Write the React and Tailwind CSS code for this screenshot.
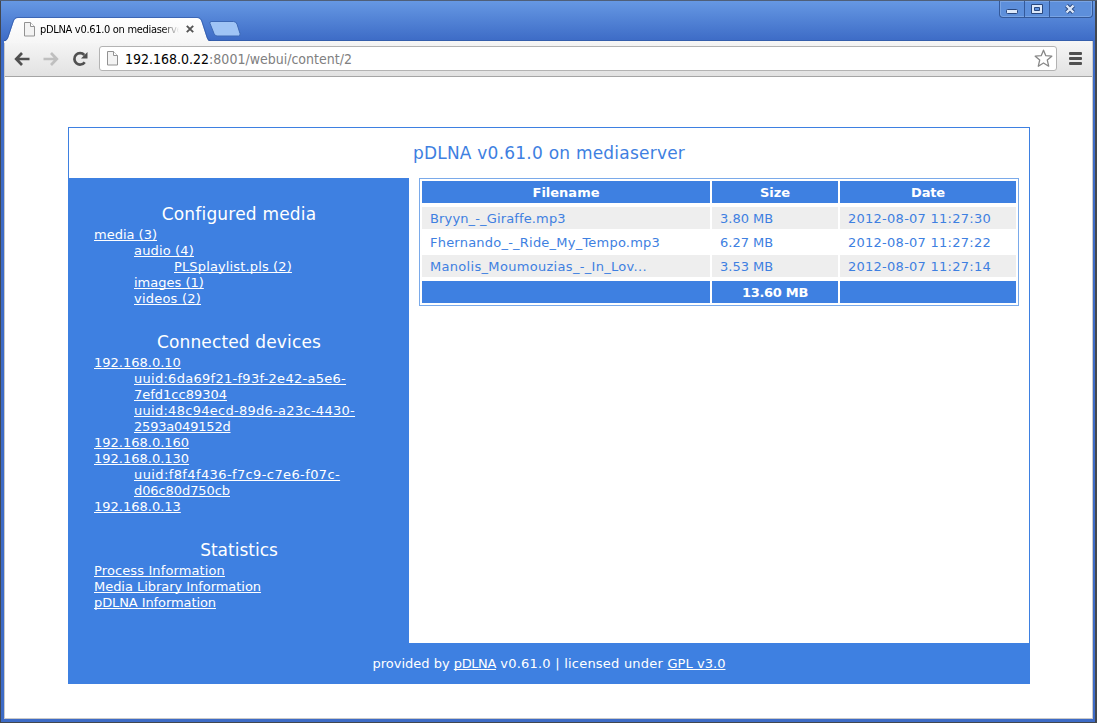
const Link = ({ children, className = "" }) => (
  <a className={`underline decoration-1 underline-offset-[1px] [text-decoration-skip-ink:none] ${className}`}>{children}</a>
);

const media = [
  ["media (3)", "", ""],
  ["audio (4)", "pl-10", "tracking-[0.16px]"],
  ["PLSplaylist.pls (2)", "pl-20", "tracking-[0.14px]"],
  ["images (1)", "pl-10", ""],
  ["videos (2)", "pl-10", "tracking-[0.22px]"],
];

const devices = [
  ["192.168.0.10", "", ""],
  ["uuid:6da69f21-f93f-2e42-a5e6-", "pl-10", "tracking-[0.28px]"],
  ["7efd1cc89304", "pl-10", ""],
  ["uuid:48c94ecd-89d6-a23c-4430-", "pl-10", "tracking-[0.28px]"],
  ["2593a049152d", "pl-10", "tracking-[-0.2px]"],
  ["192.168.0.160", "", ""],
  ["192.168.0.130", "", ""],
  ["uuid:f8f4f436-f7c9-c7e6-f07c-", "pl-10", "tracking-[0.39px]"],
  ["d06c80d750cb", "pl-10", "tracking-[-0.08px]"],
  ["192.168.0.13", "", ""],
];

const statistics = [
  ["Process Information", "", "tracking-[0.12px]"],
  ["Media Library Information", "", "tracking-[-0.04px]"],
  ["pDLNA Information", "", "tracking-[-0.09px]"],
];

const files = [
  ["Bryyn_-_Giraffe.mp3", "3.80 MB", "2012-08-07 11:27:30", "tracking-[0.14px]"],
  ["Fhernando_-_Ride_My_Tempo.mp3", "6.27 MB", "2012-08-07 11:27:22", "tracking-[0.22px]"],
  ["Manolis_Moumouzias_-_In_Lov...", "3.53 MB", "2012-08-07 11:27:14", "tracking-[0.31px]"],
];

function Section({ title, titleClass, items }) {
  return (
    <section>
      <h2 className={`text-center text-[17px] leading-5 ${titleClass}`}>{title}</h2>
      <ul className="mt-[3px] text-[13px] leading-4">
        {items.map(([label, indent, tracking]) => (
          <li key={label} className={`whitespace-nowrap ${indent}`}>
            <Link className={tracking}>{label}</Link>
          </li>
        ))}
      </ul>
    </section>
  );
}

function PageIcon({ className }) {
  return (
    <svg className={className} width="12" height="15" viewBox="0 0 12 15" fill="none">
      <path d="M.5 .5h6l4 4v9.500H.5z" fill="#f3f3f3" stroke="#929292" />
      <path d="M6.500 .5v4h4" fill="#fff" stroke="#929292" />
    </svg>
  );
}

function TitleBar() {
  return (
    <div className="flex h-10 items-end shadow-[inset_0_-1px_0_#345eac]">
      <div className="relative h-6 w-[203px]">
        <svg className="absolute left-0 top-0" width="210" height="26" viewBox="0 0 210 26">
          <defs>
            <linearGradient id="tab" x1="0" y1="0" x2="0" y2="1">
              <stop offset="0" stopColor="#fefefe" />
              <stop offset="1" stopColor="#f6f6f6" />
            </linearGradient>
          </defs>
          <path d="M0 26V24.500C2.500 24 3.500 22.500 4.500 20L9.500 5C10.700 2 11.500 1 14 1H193C195.500 1 196.500 2 197.600 5L202.500 20C203.500 22.500 204 24.500 207 24.500V26z" fill="url(#tab)" />
          <path d="M0 23.500C2.500 23.500 3.200 22 4 20L9 5C10.200 1.500 11.500 .5 14 .5H193C195.500 .5 197 1.500 198.200 5L203 20C203.800 22.500 205 23.500 207 23.500" fill="none" stroke="#2f56a3" strokeOpacity=".65" />
        </svg>
        <div className="relative flex h-full items-center pl-5">
          <PageIcon />
          <span className="ml-1 mt-[2px] w-[139px] overflow-hidden whitespace-nowrap font-['DejaVu_Sans_Condensed','DejaVu_Sans',sans-serif] text-[11px] leading-4 tracking-[-0.31px] text-black [mask-image:linear-gradient(to_right,#000_88%,transparent)]">
            pDLNA v0.61.0 on mediaserver
          </span>
          <svg className="ml-[7px]" width="8" height="8" viewBox="0 0 8 8">
            <path d="M.8 .8L7.200 7.200M7.200 .8L.8 7.200" stroke="#555" strokeWidth="1.900" />
          </svg>
        </div>
      </div>
      <svg className="mb-[4px]" width="34" height="16" viewBox="0 0 34 16">
        <path d="M4 .5H26.500Q29 .5 30 3L33 12.500Q33.500 15 31.500 15H10Q8 15 7 12.500L3 2.500Q2.500 .5 4 .5z" fill="#9fc4f5" stroke="#3c68b5" />
      </svg>
      <div className="ml-auto flex h-[17px] w-[94px] self-start rounded-b-[4px] border border-t-0 border-[#34599a] bg-[#5d8fdb] shadow-[inset_0_0_0_1px_#79a4e4]">
        <div className="flex w-[25px] items-center justify-center border-r border-[#34599a]">
          <svg className="mt-1" width="12" height="5" viewBox="0 0 12 5"><rect x=".5" y=".5" width="11" height="4" rx="1" fill="#dce8fa" stroke="#29477d" /></svg>
        </div>
        <div className="flex w-[25px] items-center justify-center border-r border-[#34599a]">
          <svg width="12" height="10" viewBox="0 0 12 10"><path fillRule="evenodd" d="M.5 .5h11v9H.5zM3.500 3.500h5v3h-5z" fill="#dce8fa" stroke="#29477d" /></svg>
        </div>
        <div className="flex flex-1 items-center justify-center pr-[2px]">
          <svg width="12" height="10" viewBox="0 0 12 10">
            <path d="M2.500 1.500L9.500 8.500M9.500 1.500L2.500 8.500" stroke="#29477d" strokeWidth="4.200" />
            <path d="M2.500 1.500L9.500 8.500M9.500 1.500L2.500 8.500" stroke="#dce8fa" strokeWidth="2.400" />
          </svg>
        </div>
      </div>
    </div>
  );
}

function Toolbar() {
  return (
    <div className="flex h-[36px] items-center border-b border-[#a5a5a5] bg-linear-to-b from-[#f6f6f6] to-[#e2e2e2] pl-[9px] pr-[10px]">
      <svg width="16" height="14" viewBox="0 0 16 14" fill="none" stroke="#505050" strokeWidth="2.700">
        <path d="M8 1L2.200 7L8 13M2.500 7H15.500" />
      </svg>
      <svg className="ml-[13px]" width="16" height="14" viewBox="0 0 16 14" fill="none" stroke="#bfbfbf" strokeWidth="2.700">
        <path d="M8 1L13.800 7L8 13M13.500 7H.5" />
      </svg>
      <svg className="ml-[13px]" width="17" height="16" viewBox="0 0 17 16">
        <path d="M12.700 11.200A5.700 5.700 0 1 1 12.300 4" fill="none" stroke="#505050" strokeWidth="2.700" />
        <path d="M15.500 1V7.500H9z" fill="#505050" />
      </svg>
      <div className="ml-[10px] flex h-[25px] w-[958px] items-center rounded-[3px] border border-[#b3b3b3] bg-white pl-[7px] pr-[3px]">
        <PageIcon />
        <span className="ml-[6px] flex-1 whitespace-nowrap font-['DejaVu_Sans_Condensed','DejaVu_Sans',sans-serif] text-[14px] leading-5 text-black">
          192.168.0.22<span className="text-[#808080]">:8001/webui/content/2</span>
        </span>
        <svg width="19" height="19" viewBox="0 0 19 19" fill="#fff" stroke="#888" strokeWidth="1.300" strokeLinejoin="round">
          <path d="M9.500 1.200L11.800 6.700L17.800 7.200L13.300 11.100L14.700 17.200L9.500 14L4.300 17.200L5.700 11.100L1.200 7.200L7.200 6.700z" />
        </svg>
      </div>
      <svg className="ml-3" width="13" height="14" viewBox="0 0 13 14" fill="#505050">
        <rect y="0" width="13" height="3" rx="1" />
        <rect y="5" width="13" height="3" rx="1" />
        <rect y="10" width="13" height="3" rx="1" />
      </svg>
    </div>
  );
}

function FileTable() {
  const cols = "grid grid-cols-[288px_126px_176px] gap-[2px]";
  const head = "flex h-[22px] items-center justify-center bg-[#3e80e1] pt-[2px]";
  return (
    <div className="flex h-[128px] w-[600px] flex-col justify-between border border-[#7aaaea] p-[2px] text-[13px] leading-4">
      <div className={`${cols} font-bold text-white`}>
        <div className={head}>Filename</div>
        <div className={head}>Size</div>
        <div className={`${head} tracking-[-0.15px]`}>Date</div>
      </div>
      <div className="flex flex-col gap-[2px]">
        {files.map(([name, size, date, tracking], i) => {
          const cell = `flex h-[22px] items-center whitespace-nowrap pl-2 pt-[2px] ${i % 2 === 0 ? "bg-[#eeeeee]" : "bg-white"}`;
          return (
            <div key={name} className={cols}>
              <div className={`${cell} ${tracking}`}>{name}</div>
              <div className={cell}>{size}</div>
              <div className={`${cell} tracking-[0.26px]`}>{date}</div>
            </div>
          );
        })}
      </div>
      <div className={`${cols} font-bold text-white`}>
        <div className={head} />
        <div className={`${head} tracking-[-0.31px]`}>13.60 MB</div>
        <div className={head} />
      </div>
    </div>
  );
}

export default function App() {
  return (
    <div className="flex h-[723px] w-[1097px] flex-col overflow-hidden border-t border-[#4f5f78] bg-[#3d6bc0] bg-linear-to-b from-[#6698e3] to-[#3d6bc6] to-[40px] font-['DejaVu_Sans',sans-serif]">
      <div className="flex flex-1 flex-col border-b border-l border-r-2 border-b-[#42474f] border-l-[#42474f] border-r-[#42474f] pb-[3px] pl-[3px] pr-[2px]">
        <TitleBar />
        <div className="flex flex-1 flex-col border-x border-b border-[#c9c9c9]">
          <Toolbar />
          <main className="flex-1 bg-white pl-[63px] pt-[50px]">
            <div className="flex h-[557px] w-[962px] flex-col border border-[#3e80e1] text-[#3e80e1]">
              <h1 className="flex h-[50px] items-center justify-center text-[17px] leading-5 tracking-[0.22px]">
                pDLNA v0.61.0 on mediaserver
              </h1>
              <div className="flex h-[465px]">
                <aside className="flex w-[340px] flex-col gap-[25px] bg-[#3e80e1] pl-[25px] pr-[25px] pt-[26px] text-white">
                  <Section title="Configured media" titleClass="tracking-[0.2px]" items={media} />
                  <Section title="Connected devices" titleClass="tracking-[0.14px]" items={devices} />
                  <Section title="Statistics" titleClass="" items={statistics} />
                </aside>
                <div className="pl-[10px]">
                  <FileTable />
                </div>
              </div>
              <footer className="flex flex-1 items-center justify-center whitespace-pre bg-[#3e80e1] pt-[2px] text-[13px] leading-4 text-white">
                provided by <Link className="tracking-[-0.4px]">pDLNA</Link><span className="tracking-[0.22px]"> v0.61.0 | licensed under </span><Link className="tracking-[0.05px]">GPL v3.0</Link>
              </footer>
            </div>
          </main>
        </div>
      </div>
    </div>
  );
}
